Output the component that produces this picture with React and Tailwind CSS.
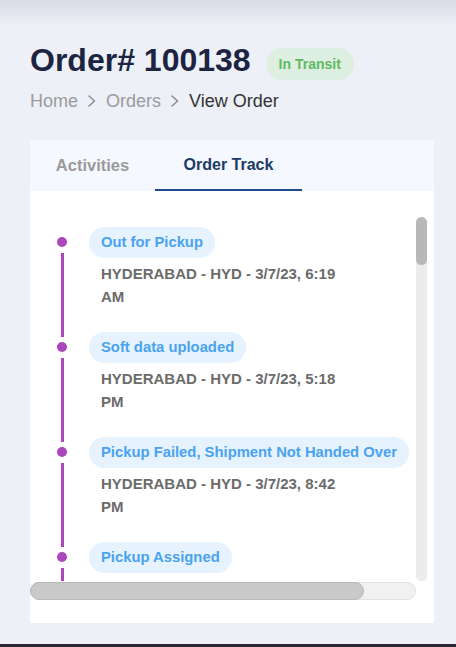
import React, { useState } from "react";

const events = [
    { title: "Out for Pickup", place: "HYDERABAD - HYD", time: "3/7/23, 6:19 AM" },
    { title: "Soft data uploaded", place: "HYDERABAD - HYD", time: "3/7/23, 5:18 PM" },
    { title: "Pickup Failed, Shipment Not Handed Over", place: "HYDERABAD - HYD", time: "3/7/23, 8:42 PM" },
    { title: "Pickup Assigned", place: "HYDERABAD - HYD", time: "3/7/23, 4:05 PM" },
];

const Chevron = () => (
    <svg width="8" height="12" viewBox="0 0 8 12" className="mx-[10px] shrink-0">
        <polyline points="1,1 6.5,6 1,11" fill="none" stroke="#8f8f8f" strokeWidth="1.6" strokeLinecap="round" strokeLinejoin="round" />
    </svg>
);

const TrackItem = ({ item, first }) => (
    <div className="flex gap-[22px]">
        {/* dot + line */}
        <div className="flex w-[10px] shrink-0 flex-col items-center">
            <div className={`h-[5px] w-[3px] ${first ? "" : "bg-[#ab47bc]"}`} />
            <div className="mt-[5px] h-[10px] w-[10px] rounded-full bg-[#ab47bc]" />
            <div className="mt-[6px] w-[3px] flex-1 bg-[#ab47bc]" />
        </div>
        <div className="pb-[24px]">
            <span className="inline-flex h-[31px] items-center whitespace-nowrap rounded-full bg-[#e6f2fd] px-[12px] text-[14.8px] font-bold text-[#4aa3ee]">
                {item.title}
            </span>
            <p className="mt-[4px] w-[255px] pl-[12px] text-[15px] font-bold leading-[23px] text-[#6b6b6b]">
                {`${item.place} - ${item.time}`}
            </p>
        </div>
    </div>
);

const App = () => {
    const [tab, setTab] = useState("track");

    return (
        <div className="h-[647px] w-[456px] overflow-hidden bg-[#edf0f7] font-['Liberation_Sans',Arial,sans-serif]">
            <div className="h-[26px] bg-gradient-to-b from-[#d9dce4] to-[#eceff6]" />

            <div className="pl-[30px] pr-[22px]">
                <div className="mt-[14px] flex items-end gap-[15px]">
                    <h1 className="text-[32px] font-bold leading-[40px] text-[#1b2440]">Order# 100138</h1>
                    <span className="inline-flex h-[32px] items-center rounded-full bg-[#dcefe0] px-[13px] text-[14px] font-bold text-[#5fba65]">
                        In Transit
                    </span>
                </div>

                <div className="mt-[9px] flex items-center text-[18px] leading-[24px]">
                    <span className="text-[#9b9b9b]">Home</span>
                    <Chevron />
                    <span className="text-[#9b9b9b]">Orders</span>
                    <Chevron />
                    <span className="text-[#333333]">View Order</span>
                </div>

                <div className="mt-[27px] bg-white">
                    <div className="flex h-[51px] bg-[#f5f8fe]">
                        <button
                            onClick={() => setTab("activities")}
                            className={`flex w-[125px] items-center justify-center text-[16.5px] font-bold ${tab === "activities" ? "border-b-2 border-[#1e4a8a] text-[#1c3a66]" : "text-[#9a9a9a]"}`}
                        >
                            Activities
                        </button>
                        <button
                            onClick={() => setTab("track")}
                            className={`flex w-[147px] items-center justify-center text-[16px] font-bold ${tab === "track" ? "border-b-2 border-[#1e4a8a] text-[#1c3a66]" : "text-[#9a9a9a]"}`}
                        >
                            Order Track
                        </button>
                    </div>

                    <div className="pb-[23px] pr-[7px] pt-[26px]">
                        <div className="flex h-[364px]">
                            <div className="flex-1 overflow-hidden pl-[27px] pt-[10px]">
                                {events.map((item, i) => (
                                    <TrackItem key={i} item={item} first={i === 0} />
                                ))}
                            </div>
                            <div className="w-[11px] shrink-0 rounded-full bg-[#ececec]">
                                <div className="h-[48px] rounded-full bg-[#b8b8b8]" />
                            </div>
                        </div>
                        <div className="mt-[1px] h-[18px] w-[386px] rounded-full border border-[#e2e2e2] bg-[#f1f1f1]">
                            <div className="-m-px h-[18px] w-[334px] rounded-full border border-[#b9b9b9] bg-[#c9c9c9]" />
                        </div>
                    </div>
                </div>
            </div>

            <div className="mt-[21px] h-[3px] bg-[#2c2638]" />
        </div>
    );
};

export default App;
